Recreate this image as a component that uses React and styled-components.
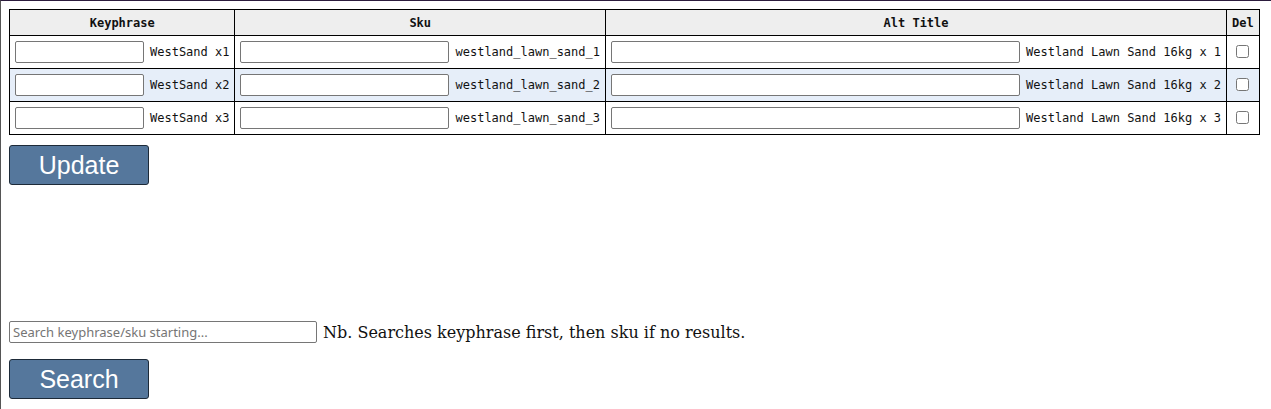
import React from 'react';
import styled, { createGlobalStyle } from 'styled-components';

const Global = createGlobalStyle`
  html, body {
    margin: 0;
    padding: 0;
    background: #fff;
  }
`;

const Frame = styled.div`
  min-height: 100vh;
  box-sizing: border-box;
  border-top: 1px solid #2b1b3d;
  border-left: 1px solid #555;
  padding: 8px 8px 0 8px;
  font-family: "DejaVu Serif", serif;
  font-size: 16px;
  color: #111;
`;

const Table = styled.table`
  border-collapse: collapse;
  font-family: "DejaVu Sans Mono", monospace;
  font-size: 12px;
  color: #111;
`;

const Th = styled.th`
  border: 1px solid #000;
  background: #eeeeee;
  height: 25px;
  padding: 0 5px;
  font-weight: bold;
  text-align: center;
`;

const Row = styled.tr`
  background: ${p => (p.$alt ? '#e6eef9' : '#fff')};
`;

const Td = styled.td`
  border: 1px solid #000;
  padding: 5px;
  white-space: nowrap;
  text-align: ${p => (p.$center ? 'center' : 'left')};
`;

const Field = styled.input`
  box-sizing: border-box;
  width: ${p => p.$w}px;
  height: 22px;
  border: 1px solid #767676;
  border-radius: 2px;
  background: #fff;
  vertical-align: middle;
  margin: 0 6px 0 0;
  padding: 1px 2px;
`;

const Check = styled.input`
  width: 13px;
  height: 13px;
  margin: 0 0 2px 0;
  vertical-align: middle;
`;

const Button = styled.button`
  display: block;
  width: 140px;
  height: 40px;
  background: #55779c;
  border: 1px solid #1d2a38;
  border-radius: 3px;
  color: #fff;
  font-family: "Liberation Sans", Arial, sans-serif;
  font-size: 25px;
  padding: 0;
  margin-top: ${p => p.$top}px;
`;

const SearchLine = styled.div`
  margin-top: 136px;
  display: flex;
  align-items: center;
  gap: 6px;
`;

const SearchInput = styled.input`
  box-sizing: border-box;
  width: 308px;
  height: 22px;
  border: 1px solid #767676;
  border-radius: 2px;
  padding: 1px 3px;
  font-family: "Noto Sans", sans-serif;
  font-size: 13px;
  &::placeholder {
    color: #757575;
  }
`;

const rows = [1, 2, 3];

export default function App() {
  return (
    <>
      <Global />
      <Frame>
        <Table>
          <thead>
            <tr>
              <Th>Keyphrase</Th>
              <Th>Sku</Th>
              <Th>Alt Title</Th>
              <Th>Del</Th>
            </tr>
          </thead>
          <tbody>
            {rows.map(n => (
              <Row key={n} $alt={n === 2}>
                <Td><Field $w={129} />WestSand x{n}</Td>
                <Td><Field $w={209} />westland_lawn_sand_{n}</Td>
                <Td><Field $w={409} />Westland Lawn Sand 16kg x {n}</Td>
                <Td $center><Check type="checkbox" /></Td>
              </Row>
            ))}
          </tbody>
        </Table>
        <Button $top={10}>Update</Button>
        <SearchLine>
          <SearchInput placeholder="Search keyphrase/sku starting..." />
          <span>Nb. Searches keyphrase first, then sku if no results.</span>
        </SearchLine>
        <Button $top={16}>Search</Button>
      </Frame>
    </>
  );
}
